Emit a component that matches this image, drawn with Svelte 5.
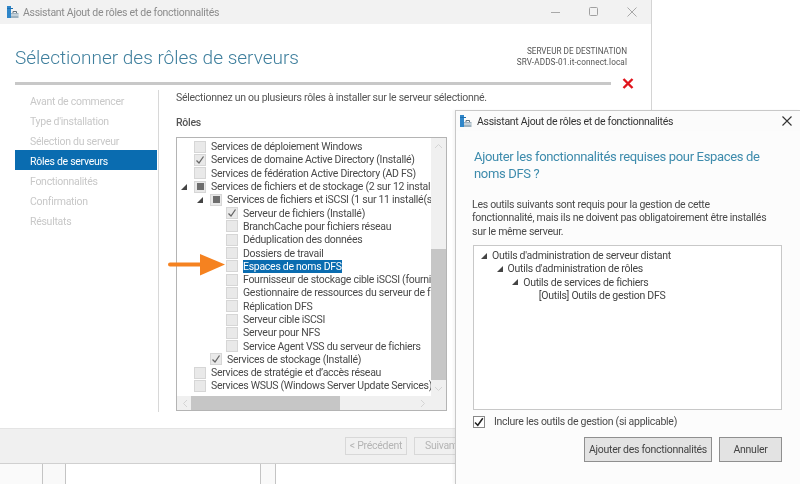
<script>
  const steps = [
    'Avant de commencer',
    "Type d'installation",
    'Sélection du serveur',
    'Rôles de serveurs',
    'Fonctionnalités',
    'Confirmation',
    'Résultats'
  ];

  // level: indent in the tree, exp: expander shown, state: none | check | part
  const roles = [
    { level: 0, label: 'Services de déploiement Windows', state: 'none' },
    { level: 0, label: 'Services de domaine Active Directory (Installé)', state: 'check' },
    { level: 0, label: 'Services de fédération Active Directory (AD FS)', state: 'none' },
    { level: 0, exp: true, label: 'Services de fichiers et de stockage (2 sur 12 installé(s))', state: 'part' },
    { level: 1, exp: true, label: 'Services de fichiers et iSCSI (1 sur 11 installé(s))', state: 'part' },
    { level: 2, label: 'Serveur de fichiers (Installé)', state: 'check' },
    { level: 2, label: 'BranchCache pour fichiers réseau', state: 'none' },
    { level: 2, label: 'Déduplication des données', state: 'none' },
    { level: 2, label: 'Dossiers de travail', state: 'none' },
    { level: 2, label: 'Espaces de noms DFS', state: 'none', selected: true },
    { level: 2, label: 'Fournisseur de stockage cible iSCSI (fournisseur VSS)', state: 'none' },
    { level: 2, label: 'Gestionnaire de ressources du serveur de fichiers', state: 'none' },
    { level: 2, label: 'Réplication DFS', state: 'none' },
    { level: 2, label: 'Serveur cible iSCSI', state: 'none' },
    { level: 2, label: 'Serveur pour NFS', state: 'none' },
    { level: 2, label: 'Service Agent VSS du serveur de fichiers', state: 'none' },
    { level: 1, label: 'Services de stockage (Installé)', state: 'check' },
    { level: 0, label: 'Services de stratégie et d’accès réseau', state: 'none' },
    { level: 0, label: 'Services WSUS (Windows Server Update Services)', state: 'none' }
  ];

  const tools = [
    { level: 0, exp: true, label: "Outils d'administration de serveur distant" },
    { level: 1, exp: true, label: "Outils d'administration de rôles" },
    { level: 2, exp: true, label: 'Outils de services de fichiers' },
    { level: 3, label: '[Outils] Outils de gestion DFS' }
  ];
</script>

{#snippet appIcon()}
  <svg class="app-icon" width="13" height="14" viewBox="0 0 13 14">
    <path d="M1 1h4v12H1z" fill="#2f86c9" />
    <path d="M1 3h6v1H1z" fill="#1d6fb0" />
    <path d="M5 8h7.500v5H5z" fill="#9fb2bf" />
    <path d="M7 8V6.500h3.500V8" fill="none" stroke="#5f6f7a" />
    <path d="M5 10h7.500" stroke="#e8eef2" />
  </svg>
{/snippet}

{#snippet expander()}
  <svg width="6" height="6" viewBox="0 0 6 6"><path d="M6 0v6H0z" fill="#444" /></svg>
{/snippet}

<div class="desktop">
  <section class="wizard">
    <header class="titlebar">
      {@render appIcon()}
      <span class="title-text">Assistant Ajout de rôles et de fonctionnalités</span>
      <div class="win-buttons">
        <svg width="10" height="10" viewBox="0 0 10 10"><path d="M0 5.500h9" stroke="#a8a8a8" /></svg>
        <svg width="10" height="10" viewBox="0 0 10 10"><rect x=".5" y=".5" width="8" height="8" rx="1" fill="none" stroke="#a0a0a0" /></svg>
        <svg width="10" height="10" viewBox="0 0 10 10"><path d="M.5.500l9 9m0-9l-9 9" stroke="#a8a8a8" /></svg>
      </div>
    </header>

    <div class="head">
      <h1>Sélectionner des rôles de serveurs</h1>
      <div class="dest">
        <div>SERVEUR DE DESTINATION</div>
        <div class="host">SRV-ADDS-01.it-connect.local</div>
      </div>
    </div>
    <div class="progress">
      <div class="bar"></div>
      <svg width="12" height="11" viewBox="0 0 12 11"><path d="M1.500 1l9 9m0-9l-9 9" stroke="#e0141c" stroke-width="2.400" /></svg>
    </div>

    <div class="body">
      <nav class="steps">
        {#each steps as step, i}
          <div class="step" class:active={i === 3}>{step}</div>
        {/each}
      </nav>
      <main class="content">
        <p class="intro">Sélectionnez un ou plusieurs rôles à installer sur le serveur sélectionné.</p>
        <h2>Rôles</h2>
        <div class="listbox">
          <div class="rows">
            {#each roles as r}
              <div class="row" style="padding-left:{r.level * 16}px">
                <span class="exp">{#if r.exp}{@render expander()}{/if}</span>
                <span class="box">
                  {#if r.state === 'check'}
                    <svg width="10" height="10" viewBox="0 0 10 10"><path d="M1.500 5.500l2.500 2.500 4.500-6.500" fill="none" stroke="#666" stroke-width="1.300" /></svg>
                  {:else if r.state === 'part'}
                    <span class="part"></span>
                  {/if}
                </span>
                <span class="label" class:selected={r.selected}>{r.label}</span>
              </div>
            {/each}
          </div>
          <div class="vscroll">
            <svg width="9" height="6" viewBox="0 0 9 6"><path d="M1 5l3.500-3.500L8 5" fill="none" stroke="#d4d4d4" /></svg>
            <div class="vthumb"></div>
            <svg width="9" height="6" viewBox="0 0 9 6"><path d="M1 1l3.500 3.500L8 1" fill="none" stroke="#d4d4d4" /></svg>
          </div>
          <div class="hscroll">
            <svg width="6" height="9" viewBox="0 0 6 9"><path d="M5 1L1.500 4.500 5 8" fill="none" stroke="#d4d4d4" /></svg>
            <div class="hthumb"></div>
            <svg width="6" height="9" viewBox="0 0 6 9"><path d="M1 1l3.500 3.500L1 8" fill="none" stroke="#d4d4d4" /></svg>
          </div>
          <div class="corner"></div>
        </div>
      </main>
    </div>

    <footer class="wizard-foot">
      <button class="prev" disabled>&lt; Précédent</button>
      <button class="next" disabled>Suivant &gt;</button>
    </footer>
  </section>

  <div class="strip">
    <div class="cell a"></div>
    <div class="cell b"></div>
    <div class="cell c"></div>
    <div class="cell d"></div>
    <div class="cell e"></div>
  </div>

  <svg class="arrow" width="58" height="22" viewBox="0 0 58 22">
    <path d="M2 10.500h32" stroke="#f58220" stroke-width="4" stroke-linecap="round" />
    <path d="M32 0l25 10.500-25 11z" fill="#f58220" />
  </svg>

  <section class="dialog">
    <header class="dlg-title">
      {@render appIcon()}
      <span>Assistant Ajout de rôles et de fonctionnalités</span>
      <svg width="10" height="10" viewBox="0 0 10 10"><path d="M.5.500l9 9m0-9l-9 9" stroke="#333" stroke-width="1.100" /></svg>
    </header>
    <div class="dlg-body">
      <h3>Ajouter les fonctionnalités requises pour Espaces de noms DFS ?</h3>
      <p>Les outils suivants sont requis pour la gestion de cette fonctionnalité, mais ils ne doivent pas obligatoirement être installés sur le même serveur.</p>
      <div class="tools">
        {#each tools as t}
          <div class="tool" style="padding-left:{t.level * 15.600}px">
            <span class="tool-exp">{#if t.exp}{@render expander()}{/if}</span>
            {t.label}
          </div>
        {/each}
      </div>
      <div class="include">
        <span class="inc-box">
          <svg width="10" height="10" viewBox="0 0 10 10"><path d="M1 5.500l2.800 2.800 5-7" fill="none" stroke="#222" stroke-width="1.500" /></svg>
        </span>
        Inclure les outils de gestion (si applicable)
      </div>
      <div class="actions">
        <button class="add">Ajouter des fonctionnalités</button>
        <button class="cancel">Annuler</button>
      </div>
    </div>
  </section>
</div>

<style>
  :global(body) {
    margin: 0;
    background: #fff;
  }

  .desktop {
    position: relative;
    width: 800px;
    height: 484px;
    overflow: hidden;
    display: flex;
    flex-direction: column;
    font-family: Roboto, "Open Sans", sans-serif;
    font-size: 10.500px;
    letter-spacing: -0.28px;
    color: #4a4a4a;
    background: #fff;
    filter: blur(0.35px);
  }

  .wizard {
    width: 652px;
    height: 464px;
    flex: none;
    box-sizing: border-box;
    border-right: 1px solid #d4d4d4;
    display: flex;
    flex-direction: column;
    background: #fff;
  }

  .titlebar {
    height: 24px;
    flex: none;
    background: #f2f2f2;
    display: flex;
    align-items: center;
    padding-left: 6px;
    gap: 4px;
    color: #8c8c8c;
  }

  .win-buttons {
    margin-left: auto;
    width: 100px;
    display: flex;
    justify-content: space-between;
    box-sizing: border-box;
    padding-right: 14px;
  }

  .head {
    height: 55px;
    flex: none;
    box-sizing: border-box;
    padding: 21px 24px 0 15px;
    display: flex;
    justify-content: space-between;
  }

  h1 {
    margin: 0;
    font-size: 19px;
    line-height: 26px;
    font-weight: 300;
    letter-spacing: 0;
    color: #3f7f9d;
  }

  .dest {
    font-size: 8.200px;
    line-height: 11px;
    text-align: right;
    letter-spacing: 0;
    color: #555;
    margin-top: 1px;
  }

  .host {
    letter-spacing: 0.1px;
  }

  .progress {
    height: 9px;
    flex: none;
    box-sizing: border-box;
    padding: 0 0 1px 15px;
    display: flex;
    align-items: center;
    gap: 11px;
  }

  .bar {
    width: 596px;
    height: 3px;
    background: #c8c8c8;
  }

  .body {
    flex: 1;
    min-height: 0;
    display: flex;
  }

  .steps {
    width: 143px;
    flex: none;
    margin: 2px 0 16px 15px;
    border-right: 1px solid #d8d8d8;
  }

  .step {
    height: 20px;
    width: 142px;
    line-height: 24px;
    padding-left: 15px;
    box-sizing: border-box;
    color: #c8c8c8;
  }

  .step.active {
    background: #0a6cb0;
    color: #fff;
  }

  .content {
    flex: 1;
    padding: 3px 0 0 17px;
  }

  .intro {
    margin: 0;
    line-height: 14px;
    color: #555;
  }

  h2 {
    margin: 11px 0 0;
    font-size: 10.500px;
    line-height: 14px;
    font-weight: 500;
    color: #555;
  }

  .listbox {
    margin-top: 7px;
    width: 271px;
    height: 274px;
    box-sizing: border-box;
    border: 1px solid #b4b4b4;
    display: grid;
    grid-template-columns: 1fr 15px;
    grid-template-rows: 1fr 14px;
    background: #f0f0f0;
  }

  .rows {
    background: #fff;
    overflow: hidden;
    min-width: 0;
    padding-top: 2px;
  }

  .row {
    height: 13.300px;
    display: flex;
    align-items: center;
    white-space: nowrap;
    line-height: 13px;
  }

  .exp {
    width: 17px;
    flex: none;
    display: flex;
    justify-content: flex-end;
    padding-right: 7px;
    box-sizing: border-box;
  }

  .box {
    width: 12px;
    height: 12px;
    flex: none;
    box-sizing: border-box;
    background: #e9e9e9;
    border: 1px solid #d6d6d6;
    display: flex;
    align-items: center;
    justify-content: center;
    margin-right: 5px;
  }

  .part {
    width: 7px;
    height: 7px;
    background: #6e6e6e;
  }

  .label.selected {
    background: #0a6cb0;
    color: #fff;
  }

  .vscroll {
    display: flex;
    flex-direction: column;
    align-items: center;
    justify-content: space-between;
    padding-top: 5px;
    padding-bottom: 4px;
  }

  .vthumb {
    width: 15px;
    height: 131px;
    margin-top: auto;
    margin-bottom: 6px;
    background: #c6c6c6;
  }

  .hscroll {
    display: flex;
    align-items: center;
    padding: 0 5px;
  }

  .hthumb {
    width: 149px;
    height: 14px;
    margin-left: 3px;
    margin-right: auto;
    background: #c6c6c6;
  }

  .wizard-foot {
    height: 36px;
    flex: none;
    box-sizing: border-box;
    margin-top: auto;
    background: #f0f0f0;
    border-top: 1px solid #e4e4e4;
    border-bottom: 1px solid #d0d0d0;
    display: flex;
    align-items: center;
    padding-left: 345px;
    gap: 7px;
    overflow: hidden;
  }

  button {
    font: inherit;
    letter-spacing: inherit;
    padding: 0;
    box-sizing: border-box;
    white-space: nowrap;
  }

  .prev,
  .next {
    width: 62px;
    height: 18px;
    flex: none;
    border: 1px solid #d8d8d8;
    background: #f0f0f0;
    color: #b4b4b4;
    line-height: 14px;
  }

  .strip {
    flex: 1;
    display: flex;
    width: 455px;
  }

  .cell {
    box-sizing: border-box;
    border-right: 1px solid #c4c4c4;
  }

  .a { width: 43px; background: #fafafa; }
  .b { width: 23px; background: #f9f9f9; }
  .c { width: 195px; background: #fff; }
  .d { width: 15px; background: #f9f9f9; }
  .e { flex: 1; border-right: 0; }

  .arrow {
    position: absolute;
    left: 168px;
    top: 254px;
  }

  .dialog {
    position: absolute;
    left: 455px;
    top: 110px;
    width: 345px;
    height: 374px;
    box-sizing: border-box;
    background: #fff;
    border-top: 1px solid #c8c8c8;
    border-left: 1px solid #c8c8c8;
    box-shadow: -2px 0 2px rgba(0, 0, 0, 0.04);
    display: flex;
    flex-direction: column;
  }

  .dlg-title {
    height: 20px;
    flex: none;
    display: flex;
    align-items: center;
    padding: 0 8px 0 3px;
    gap: 5px;
    background: #fbfbfb;
    color: #333;
  }

  .dlg-title svg:last-child {
    margin-left: auto;
  }

  .dlg-body {
    flex: 1;
    padding: 17px 18px 0 16px;
    background: #fcfcfc;
    display: flex;
    flex-direction: column;
  }

  h3 {
    margin: 0 0 0 2px;
    font-size: 13px;
    line-height: 17px;
    font-weight: 400;
    letter-spacing: -0.33px;
    color: #3d8bac;
    width: 305px;
  }

  .dlg-body p {
    margin: 16px 0 0;
    line-height: 13.300px;
    color: #4a4a4a;
    width: 300px;
  }

  .tools {
    margin: 7px 0 0 1px;
    height: 165px;
    flex: none;
    box-sizing: border-box;
    border: 1px solid #c8c8c8;
    background: #fff;
    padding-top: 3px;
  }

  .tool {
    height: 13.300px;
    display: flex;
    align-items: center;
    line-height: 13px;
    color: #444;
    white-space: nowrap;
  }

  .tool-exp {
    width: 18px;
    flex: none;
    display: flex;
    justify-content: flex-end;
    padding-right: 5px;
    box-sizing: border-box;
  }

  .include {
    margin: 6px 0 0 1px;
    display: flex;
    align-items: center;
    gap: 9px;
    height: 12px;
  }

  .inc-box {
    width: 12px;
    height: 12px;
    flex: none;
    box-sizing: border-box;
    border: 1px solid #888;
    background: #fff;
    display: flex;
    align-items: center;
    justify-content: center;
  }

  .actions {
    margin-top: 9px;
    display: flex;
    justify-content: flex-end;
    gap: 7px;
  }

  .add,
  .cancel {
    height: 25px;
    border: 1px solid #8f8f8f;
    background: #e3e3e3;
    color: #444;
  }

  .add { width: 128px; }
  .cancel { width: 63px; }
</style>
